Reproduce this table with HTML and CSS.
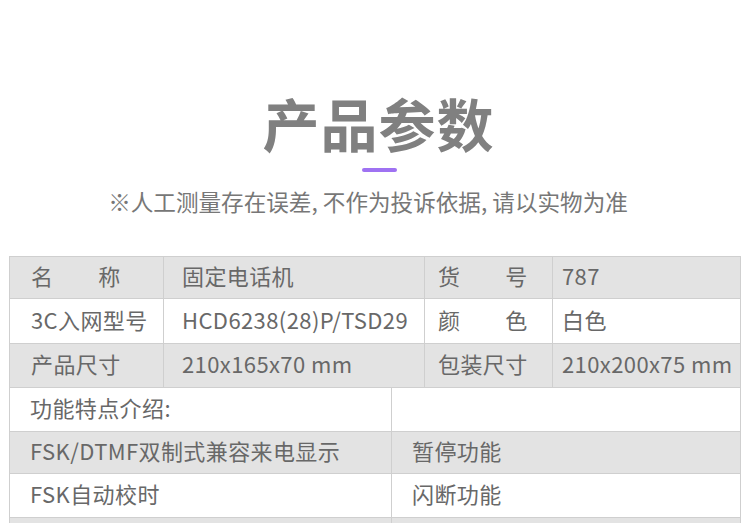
FILE: index.html
```html
<!DOCTYPE html>
<html lang="zh-CN">
<head>
<meta charset="utf-8">
<title>产品参数</title>
<link rel="stylesheet" href="styles.css">
</head>
<body>
<header class="head">
  <h1 class="title">产品参数</h1>
  <div class="bar"></div>
  <p class="note">※人工测量存在误差, 不作为投诉依据, 请以实物为准</p>
</header>
<section class="spec">
  <div class="row four gray h42">
    <div class="cell c1">名&#12288;&#12288;称</div>
    <div class="cell c2">固定电话机</div>
    <div class="cell c3">货&#12288;&#12288;号</div>
    <div class="cell c4">787</div>
  </div>
  <div class="row four h45">
    <div class="cell c1">3C入网型号</div>
    <div class="cell c2">HCD6238(28)P/TSD29</div>
    <div class="cell c3">颜&#12288;&#12288;色</div>
    <div class="cell c4">白色</div>
  </div>
  <div class="row four gray h44">
    <div class="cell c1">产品尺寸</div>
    <div class="cell c2">210x165x70 mm</div>
    <div class="cell c3">包装尺寸</div>
    <div class="cell c4">210x200x75 mm</div>
  </div>
  <div class="row two h44">
    <div class="cell w1">功能特点介绍:</div>
    <div class="cell w2"></div>
  </div>
  <div class="row two gray h42">
    <div class="cell w1">FSK/DTMF双制式兼容来电显示</div>
    <div class="cell w2">暂停功能</div>
  </div>
  <div class="row two h44">
    <div class="cell w1">FSK自动校时</div>
    <div class="cell w2">闪断功能</div>
  </div>
  <div class="row two gray h44">
    <div class="cell w1"></div>
    <div class="cell w2"></div>
  </div>
</section>
</body>
</html>
```

FILE: styles.css
```css
html, body {
  margin: 0;
  padding: 0;
  background: #ffffff;
}
body {
  font-family: "Noto Sans CJK SC", "Noto Sans", sans-serif;
  color: #686868;
  overflow: hidden;
}
.head {
  display: flex;
  flex-direction: column;
  align-items: center;
  padding-top: 94px;
}
.title {
  margin: 0;
  font-size: 57px;
  line-height: 57px;
  font-weight: 700;
  color: #808080;
  letter-spacing: 1px;
  padding-left: 7px;
}
.bar {
  margin-top: 17px;
  margin-left: 8px;
  width: 35px;
  height: 4px;
  border-radius: 2px;
  background: #9f72f2;
}
.note {
  margin: 15px 14px 0 0;
  font-size: 22.6px;
  line-height: 30px;
  color: #777777;
}
.spec {
  margin: 39px 0 0 9px;
  width: 731px;
  border-left: 1px solid #cfcfcf;
  border-top: 1px solid #cfcfcf;
}
.row {
  display: grid;
}
.row.four {
  grid-template-columns: 154px 261px 128px 188px;
}
.row.two {
  grid-template-columns: 382px 349px;
}
.row.gray {
  background: #e3e3e3;
}
.h42 { height: 42px; }
.h44 { height: 44px; }
.h45 { height: 45px; }
.cell {
  display: flex;
  align-items: center;
  box-sizing: border-box;
  border-right: 1px solid #cfcfcf;
  border-bottom: 1px solid #cfcfcf;
  padding-bottom: 5px;
  font-size: 22px;
  line-height: 1;
  letter-spacing: 0.4px;
  white-space: nowrap;
}
.c1 { padding-left: 21px; }
.c2 { padding-left: 18px; }
.c3 { padding-left: 13px; }
.c4 { padding-left: 9px; }
.w1 { padding-left: 20px; }
.w2 { padding-left: 20px; }
```
